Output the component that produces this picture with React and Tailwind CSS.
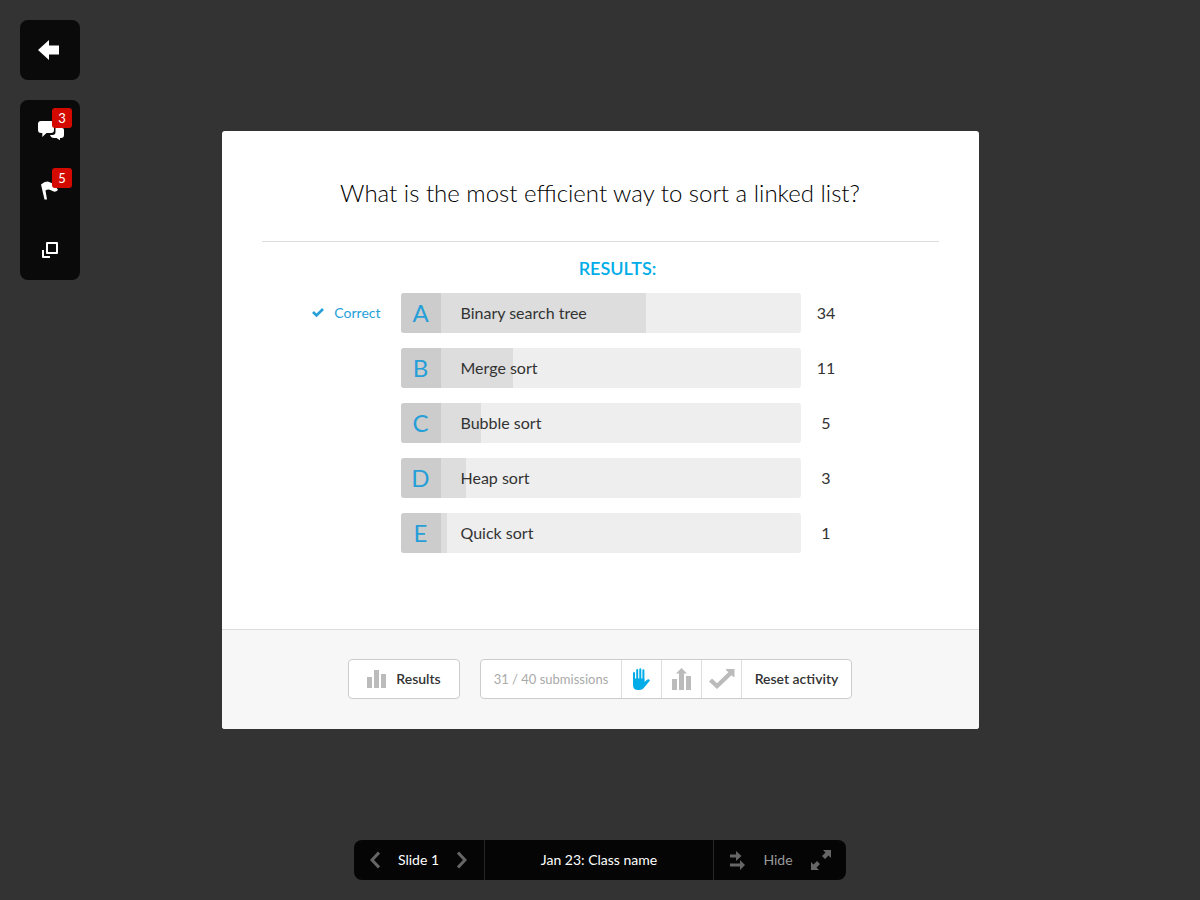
import React, { useState } from 'react'

const answers = [
  { letter: 'A', text: 'Binary search tree', count: 34, fill: 57, correct: true },
  { letter: 'B', text: 'Merge sort', count: 11, fill: 20 },
  { letter: 'C', text: 'Bubble sort', count: 5, fill: 11.2 },
  { letter: 'D', text: 'Heap sort', count: 3, fill: 7 },
  { letter: 'E', text: 'Quick sort', count: 1, fill: 1.7 }
]

const ArrowLeftIcon = () => (
  <svg width="22" height="20" viewBox="0 0 22 20" fill="currentColor" aria-hidden="true">
    <path d="M0 10 11 0v5.500h10v9H11V20z" />
  </svg>
)

const ChatIcon = () => (
  <svg width="26" height="20" viewBox="0 0 26 20" fill="currentColor" aria-hidden="true">
    <path d="M3 1h10q3 0 3 3v6q0 3-3 3H8.500L4.300 17V13H3q-3 0-3-3V4Q0 1 3 1z" />
    <path d="M17.500 8H24q2 0 2 2v5q0 3-3 3h-1v2.300L18.500 18H16q-3 0-4-3h2.500q3 0 3-3z" />
  </svg>
)

const FlagIcon = () => (
  <svg width="18" height="19" viewBox="0 0 18 19" fill="currentColor" aria-hidden="true">
    <path d="M0 3.500Q4 0 7.500.700q3 1 6 3.300l3.500 5q-3 3-6.500.500Q7 7.500 4.500 9.500L6 18.500H3.500z" />
  </svg>
)

const WindowsIcon = () => (
  <svg width="16" height="16" viewBox="0 0 16 16" fill="none" stroke="currentColor" strokeWidth="2" strokeLinejoin="round" aria-hidden="true">
    <path d="M5 1h10v10H5zM1 8v7h7" />
  </svg>
)

const CheckIcon = () => (
  <svg width="12" height="10" viewBox="0 0 12 10" fill="none" stroke="currentColor" strokeWidth="2.600" aria-hidden="true">
    <path d="M1 4 4.500 7.500 11 1" />
  </svg>
)

const BarsIcon = () => (
  <svg width="19" height="18" viewBox="0 0 19 18" fill="currentColor" aria-hidden="true">
    <path d="M0 7h5v11H0zM7 0h5v18H7zM14 4h5v14h-5z" />
  </svg>
)

const BarsUpIcon = () => (
  <svg width="19" height="22" viewBox="0 0 19 22" fill="currentColor" aria-hidden="true">
    <path d="M0 11h5v11H0zM14 8h5v14h-5zM9.500 0 15 5.500h-3V22H7V5.500H4z" />
  </svg>
)

const HandIcon = () => (
  <svg width="17" height="22" viewBox="0 0 17 22" aria-hidden="true">
    <path
      d="M1 5v10M4.200 2V12M7.300 1.200V12M10.400 2.200V13"
      fill="none"
      stroke="currentColor"
      strokeWidth="2"
      strokeLinecap="round"
    />
    <path d="M0 10.500h11.400v3.500l3-2.500q1.700-.700 2.600.900L12 18.500Q9.500 22 6.500 22H5Q0 22 0 17z" fill="currentColor" />
  </svg>
)

const CheckArrowIcon = () => (
  <svg width="26" height="20" viewBox="0 0 26 20" fill="currentColor" aria-hidden="true">
    <path d="M0 12.500 3 9.500l5 4.700L19.300 3.300 17 1V0h8.500v8h-1l-2-1.800L8 20z" />
  </svg>
)

const ChevronIcon = ({ right }) => (
  <svg width="10" height="18" viewBox="0 0 10 18" fill="none" stroke="currentColor" strokeWidth="3" aria-hidden="true">
    <path d={right ? 'M1 1.500 8 9l-7 7.500' : 'M9 1.500 2 9l7 7.500'} />
  </svg>
)

const ArrowsIcon = () => (
  <svg width="15" height="19" viewBox="0 0 15 19" fill="currentColor" aria-hidden="true">
    <path d="M0 3.500h6V0l5.500 5L6 10V6.500H0zM0 12.500h10V9l5 5-5 5v-3.500H0z" />
  </svg>
)

const ExpandIcon = () => (
  <svg width="20" height="20" viewBox="0 0 20 20" fill="currentColor" aria-hidden="true">
    <path d="M12 0h8v8l-2.500-2.500L14 9l-3-3 3.500-3.500zM8 20H0v-8l2.500 2.500L6 11l3 3-3.500 3.500z" />
  </svg>
)

const Badge = ({ children }) => (
  <span className="absolute top-2 right-2 w-5 h-5 rounded-[3px] bg-[#d40a00] text-white text-[13px] leading-5 text-center">
    {children}
  </span>
)

const AnswerRow = ({ letter, text, count, fill, correct }) => (
  <li className="flex items-center pr-[87px]">
    <div className="flex-1 flex items-center justify-end gap-[10px] pr-5 text-sm text-[#269fd9]">
      {correct && (
        <>
          <CheckIcon /> Correct
        </>
      )}
    </div>
    <div className="w-[400px] h-10 flex rounded-[3px] overflow-hidden bg-[#eeeeee]">
      <span className="w-10 bg-[#cccccc] text-[#269fd9] text-2xl leading-10 text-center">{letter}</span>
      <div className="relative flex-1">
        <div className="absolute inset-y-0 left-0 bg-[#dddddd]" style={{ width: `${fill}%` }} />
        <span className="relative block pl-5 text-base leading-10">{text}</span>
      </div>
    </div>
    <span className="w-[51px] text-base leading-10 text-center">{count}</span>
  </li>
)

const App = () => {
  const [slide, setSlide] = useState(1)

  return (
    <div className="min-h-screen flex flex-col p-5 bg-[#333333] text-[#333333] font-['Lato',sans-serif]">
      <div className="flex-1 grid grid-cols-[60px_1fr_60px]">
        <aside className="flex flex-col gap-5 text-white">
          <button aria-label="Back" className="h-[60px] flex items-center pl-[18px] rounded-lg bg-[#0a0a0a]">
            <ArrowLeftIcon />
          </button>
          <nav className="rounded-lg bg-[#0a0a0a]">
            <button aria-label="Messages" className="relative w-full h-[60px] flex items-center pl-[18px]">
              <ChatIcon />
              <Badge>3</Badge>
            </button>
            <button aria-label="Flags" className="relative w-full h-[60px] flex items-center pl-[21px]">
              <FlagIcon />
              <Badge>5</Badge>
            </button>
            <button aria-label="Windows" className="w-full h-[60px] flex items-center justify-center">
              <WindowsIcon />
            </button>
          </nav>
        </aside>

        <main className="self-center justify-self-center w-full max-w-[757px] rounded-[3px] overflow-hidden bg-white">
          <div className="px-10">
            <h1 className="pt-11 pb-[30px] border-b border-[#dddddd] text-2xl leading-9 font-light text-center text-black">
              What is the most efficient way to sort a linked list?
            </h1>
            <h2 className="pt-4 pb-[15px] pl-[35px] text-lg leading-5 font-semibold text-center text-[#00ade8]">RESULTS:</h2>
            <ul className="flex flex-col gap-[15px] pb-[76px]">
              {answers.map((answer) => (
                <AnswerRow key={answer.letter} {...answer} />
              ))}
            </ul>
          </div>

          {/* Activity controls */}
          <div className="flex justify-center gap-5 pt-[29px] pb-[30px] border-t border-[#dddddd] bg-[#f7f7f7] text-sm">
            <button className="w-[112px] h-10 flex items-center justify-center gap-[10px] rounded border border-[#cccccc] bg-white font-semibold text-[#333333]">
              <span className="text-[#bbbbbb]"><BarsIcon /></span>
              Results
            </button>
            <div className="h-10 flex rounded border border-[#cccccc] bg-white divide-x divide-[#dddddd] text-[#bbbbbb]">
              <span className="w-[141px] text-[13px] leading-[38px] text-center text-[#aaaaaa]">31 / 40 submissions</span>
              <button aria-label="Accept answers" className="w-10 flex items-center justify-center text-[#00ade8]">
                <HandIcon />
              </button>
              <button aria-label="Show results" className="w-10 flex items-center justify-center">
                <BarsUpIcon />
              </button>
              <button aria-label="Show correct answer" className="w-10 flex items-center justify-center">
                <CheckArrowIcon />
              </button>
              <button className="w-[109px] font-semibold text-[#333333]">Reset activity</button>
            </div>
          </div>
        </main>
      </div>

      <footer className="self-center w-[492px] h-10 flex rounded-lg bg-[#050505] text-sm leading-10 text-white divide-x divide-[#262626]">
        <div className="w-[131px] flex items-center justify-between pl-4 pr-[17px] text-[#666666]">
          <button aria-label="Previous slide" onClick={() => setSlide(Math.max(1, slide - 1))}>
            <ChevronIcon />
          </button>
          <span className="text-white">Slide {slide}</span>
          <button aria-label="Next slide" onClick={() => setSlide(slide + 1)}>
            <ChevronIcon right />
          </button>
        </div>
        <span className="flex-1 text-center">Jan 23: Class name</span>
        <div className="w-[132px] flex items-center justify-between pl-4 pr-[15px] text-[#666666]">
          <button aria-label="Switch activity">
            <ArrowsIcon />
          </button>
          <button className="text-[#999999]">Hide</button>
          <button aria-label="Full screen">
            <ExpandIcon />
          </button>
        </div>
      </footer>
    </div>
  )
}

export default App
